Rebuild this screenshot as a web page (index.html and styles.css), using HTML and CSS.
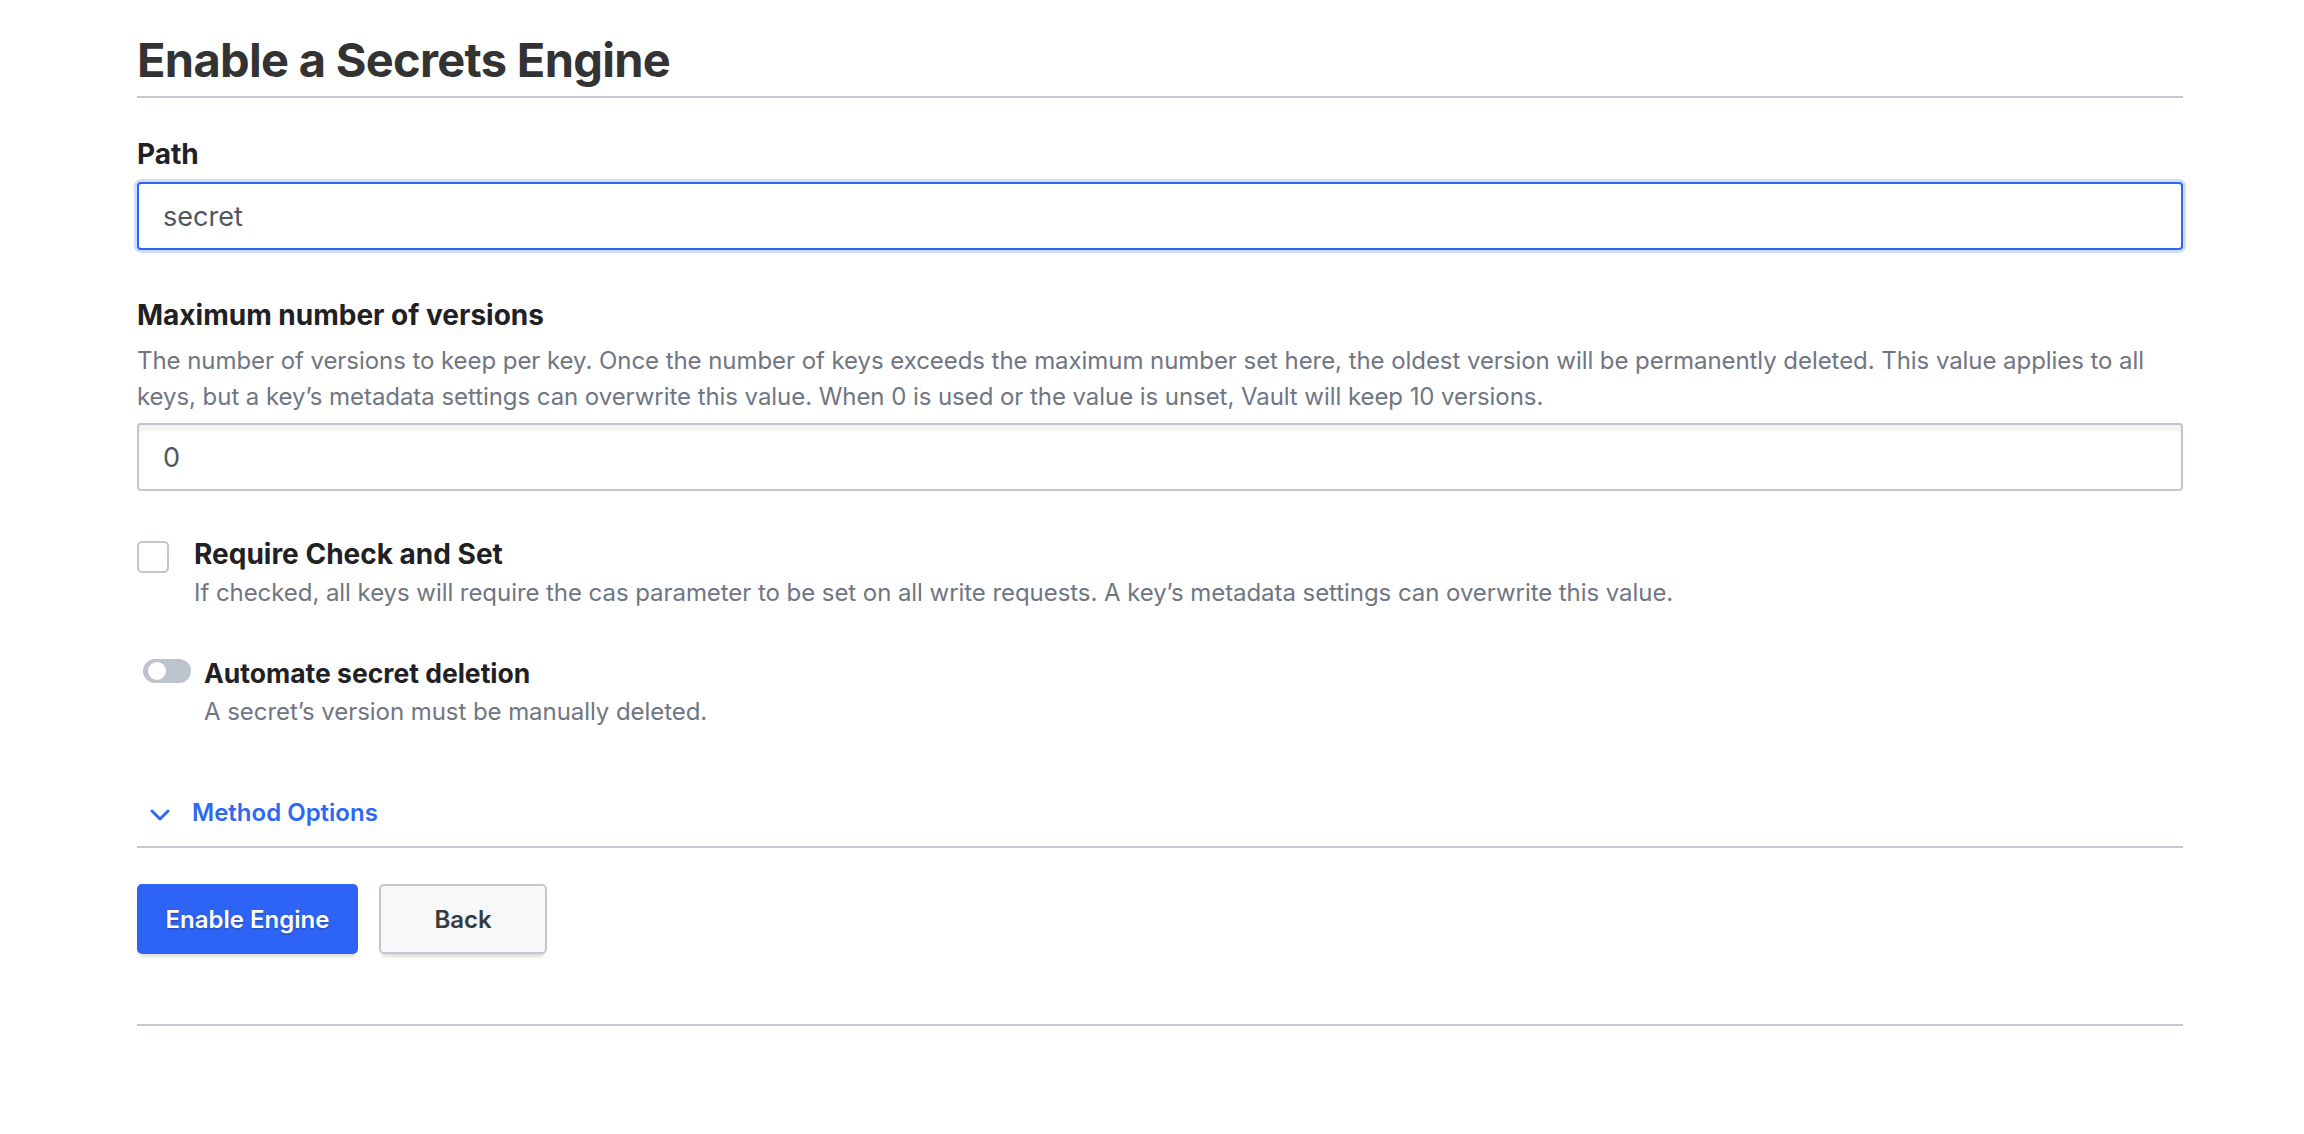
FILE: index.html
```html
<!DOCTYPE html>
<html lang="en">
<head>
    <meta charset="utf-8">
    <title>Enable a Secrets Engine</title>
    <link rel="stylesheet" href="styles.css">
</head>
<body>
    <div class="page">
        <header class="page-header">
            <h1 class="title">Enable a Secrets Engine</h1>
        </header>

        <form class="engine-form" id="engineForm">
            <div class="field field-path">
                <label class="field-label" for="path">Path</label>
                <input class="input is-focused" type="text" id="path" name="path" value="secret">
            </div>

            <div class="field field-versions">
                <label class="field-label" for="maxVersions">Maximum number of versions</label>
                <p class="help-text">The number of versions to keep per key. Once the number of keys exceeds the maximum number set here, the oldest version will be permanently deleted. This value applies to all keys, but a key’s metadata settings can overwrite this value. When 0 is used or the value is unset, Vault will keep 10 versions.</p>
                <input class="input" type="text" inputmode="numeric" id="maxVersions" name="maxVersions" value="0">
            </div>

            <div class="check-field">
                <input class="checkbox" type="checkbox" id="casRequired" name="casRequired">
                <div class="check-text">
                    <label class="field-label" for="casRequired">Require Check and Set</label>
                    <p class="help-text help-inline">If checked, all keys will require the cas parameter to be set on all write requests. A key’s metadata settings can overwrite this value.</p>
                </div>
            </div>

            <div class="toggle-field">
                <span class="toggle"><span class="toggle-knob"></span></span>
                <div class="check-text">
                    <span class="field-label toggle-label">Automate secret deletion</span>
                    <p class="help-text help-inline">A secret’s version must be manually deleted.</p>
                </div>
            </div>

            <div class="method-options">
                <button type="button" class="link-toggle">
                    <svg class="chevron" width="20" height="12" viewBox="0 0 20 12" aria-hidden="true">
                        <polyline points="2,2 10,10 18,2" fill="none" stroke="currentColor" stroke-width="3" stroke-linecap="round" stroke-linejoin="round"/>
                    </svg>
                    Method Options
                </button>
            </div>

            <div class="form-actions">
                <button type="submit" class="button button-primary">Enable Engine</button>
                <button type="button" class="button button-secondary">Back</button>
            </div>
        </form>
    </div>
</body>
</html>
```

FILE: styles.css
```css
body {
    margin: 0;
    background: #fff;
    color: #1f2124;
    font-family: Inter, "Noto Sans", sans-serif;
}

.page {
    width: 2046px;
    margin-left: 137px;
}

.page-header {
    padding-top: 30px;
    padding-bottom: 6px;
    border-bottom: 2px solid #c4c8d0;
}

.title {
    margin: 0;
    font-size: 47px;
    line-height: 60px;
    font-weight: 700;
    letter-spacing: -0.7px;
    color: #333333;
}

.field-path {
    padding-top: 38px;
}

.field-label {
    display: block;
    font-size: 28px;
    line-height: 36px;
    font-weight: 700;
    color: #1f2124;
}

.toggle-label {
    font-size: 26.5px;
}

.field-path .field-label {
    margin-bottom: 10px;
}

.input {
    display: block;
    width: 100%;
    height: 68px;
    box-sizing: border-box;
    padding: 0 24px;
    font-family: inherit;
    font-size: 27px;
    color: #4f5663;
    background: #fff;
    border: 2px solid #c2c6ce;
    border-radius: 4px;
    box-shadow: inset 0 6px 2px rgba(10, 10, 10, 0.05);
    outline: none;
}

.input.is-focused {
    border-color: #2e66f4;
    box-shadow: 0 0 0 3px rgba(46, 102, 244, 0.22);
}

.field-versions {
    margin-top: 47px;
}

.help-text {
    margin: 10px 0 8px;
    font-size: 24px;
    line-height: 36px;
    letter-spacing: -0.06px;
    color: #6f7682;
}

.help-inline {
    margin: 3px 0 0;
}

.check-field {
    display: flex;
    align-items: flex-start;
    gap: 25px;
    margin-top: 45px;
}

.checkbox {
    appearance: none;
    -webkit-appearance: none;
    flex: none;
    width: 32px;
    height: 32px;
    margin: 5px 0 0;
    box-sizing: border-box;
    border: 2px solid #c2c6ce;
    border-radius: 5px;
    background: #fff;
}

.toggle-field {
    display: flex;
    align-items: flex-start;
    gap: 13px;
    margin-top: 44px;
    padding-left: 6px;
}

.toggle {
    flex: none;
    display: flex;
    align-items: center;
    width: 48px;
    height: 24px;
    margin-top: 4px;
    padding-left: 5px;
    box-sizing: border-box;
    border-radius: 12px;
    background: #bdc3cc;
}

.toggle-knob {
    width: 18px;
    height: 18px;
    border-radius: 50%;
    background: #fff;
}

.method-options {
    margin-top: 65px;
    padding-bottom: 15px;
    border-bottom: 2px solid #c4c8d0;
}

.link-toggle {
    display: flex;
    align-items: center;
    gap: 22px;
    padding: 0 0 0 13px;
    border: 0;
    background: none;
    font-family: inherit;
    font-size: 24px;
    line-height: 36px;
    font-weight: 600;
    color: #2e67f4;
    cursor: pointer;
}

.chevron {
    margin-top: 3px;
}

.form-actions {
    display: flex;
    gap: 21px;
    padding-top: 36px;
    padding-bottom: 70px;
    border-bottom: 2px solid #c4c8d0;
}

.button {
    height: 70px;
    padding: 0 26px;
    font-family: inherit;
    font-size: 24px;
    font-weight: 600;
    border-radius: 5px;
    box-shadow: 0 6px 3px -3px rgba(10, 10, 10, 0.13);
    cursor: pointer;
}

.button-primary {
    min-width: 221px;
    color: #fff;
    background: #2e64f5;
    border: 2px solid #2e64f5;
    text-shadow: 0 1px 2px rgba(0, 0, 0, 0.3);
}

.button-secondary {
    min-width: 168px;
    color: #373a42;
    background: #f7f8fa;
    border: 2px solid #c2c6ce;
}
```
